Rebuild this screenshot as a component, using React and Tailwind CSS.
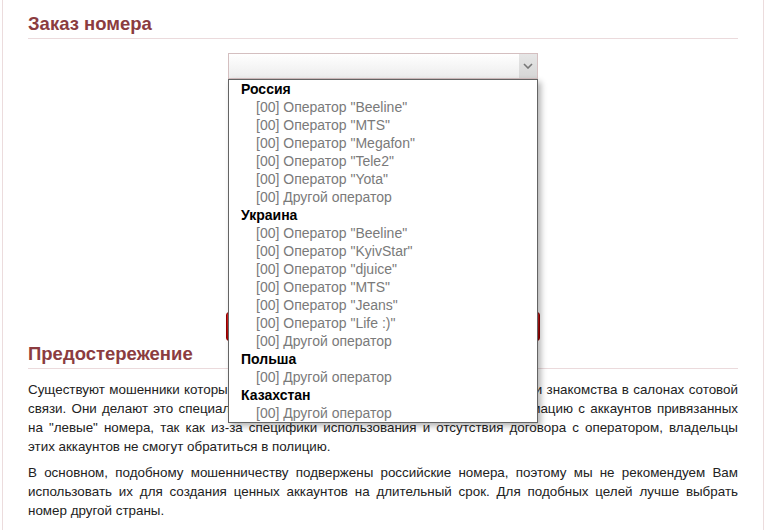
import React from 'react';

const groups = [
  {
    name: 'Россия',
    items: ['Оператор "Beeline"', 'Оператор "MTS"', 'Оператор "Megafon"', 'Оператор "Tele2"', 'Оператор "Yota"', 'Другой оператор'],
  },
  {
    name: 'Украина',
    items: ['Оператор "Beeline"', 'Оператор "KyivStar"', 'Оператор "djuice"', 'Оператор "MTS"', 'Оператор "Jeans"', 'Оператор "Life :)"', 'Другой оператор'],
  },
  { name: 'Польша', items: ['Другой оператор'] },
  { name: 'Казахстан', items: ['Другой оператор'] },
];

const para1 = [
  'Существуют мошенники которые массово скупают номера телефонов через свои знакомства в салонах сотовой',
  'связи. Они делают это специально, чтобы в последствии похитить всю информацию с аккаунтов привязанных',
  'на "левые" номера, так как из-за специфики использования и отсутствия договора с оператором, владельцы',
];

const para2 = [
  'В основном, подобному мошенничеству подвержены российские номера, поэтому мы не рекомендуем Вам',
  'использовать их для создания ценных аккаунтов на длительный срок. Для подобных целей лучше выбрать',
];

function Lines({ lines, last }) {
  return (
    <div className="text-[13.4px] leading-[19px] text-[#222]">
      {lines.map((l, i) => (
        <div key={i} className="whitespace-nowrap text-justify [text-align-last:justify]">{l}</div>
      ))}
      <div>{last}</div>
    </div>
  );
}

export default function App() {
  return (
    <div className="w-[766px] h-[530px] overflow-hidden bg-white pl-[2px] font-['Liberation_Sans',Arial,sans-serif]">
      <div className="w-[762px] h-full border-x border-[#ecdcdd] pl-[25px] pr-[25px] pt-[12px]">
        <h2 className="text-[18.5px] leading-[24px] font-bold text-[#8b3c3f] pb-[2px] border-b border-[#ebdadc]">
          Заказ номера
        </h2>

        <div className="relative mt-[14px] w-[310px] mx-auto">
          <div className="h-[26px] border border-[#d4bfc0] bg-gradient-to-b from-white to-[#ededed] flex justify-end">
            <div className="w-[18px] h-full bg-gradient-to-b from-[#e6e6e6] to-[#d6d6d6] flex items-center justify-center">
              <svg width="10" height="6" viewBox="0 0 10 6">
                <path d="M1 1 L5 5 L9 1" fill="none" stroke="#777" strokeWidth="1.6" />
              </svg>
            </div>
          </div>

          <div className="absolute left-0 top-[26px] w-[310px] z-10 bg-white border border-[#646464] shadow-[3px_3px_6px_rgba(0,0,0,0.3)] text-[14px] leading-[18px]">
            {groups.map((g) => (
              <div key={g.name}>
                <div className="pl-[12px] font-bold text-black">{g.name}</div>
                {g.items.map((it, i) => (
                  <div key={i} className="pl-[27px] text-[#7a7a7a] whitespace-nowrap">[00] {it}</div>
                ))}
              </div>
            ))}
          </div>

          <button className="block mt-[233px] -mx-[2px] w-[314px] h-[29px] rounded-[3px] border border-[#8e0000] bg-gradient-to-b from-[#d62020] to-[#a80000] text-white text-[14px]">
            Заказать
          </button>
        </div>

        <h2 className="mt-[1px] text-[18.5px] leading-[24px] font-bold text-[#8b3c3f] pb-[2px] border-b border-[#ebdadc]">
          Предостережение
        </h2>

        <div className="mt-[11px]">
          <Lines lines={para1} last="этих аккаунтов не смогут обратиться в полицию." />
        </div>
        <div className="mt-[7px]">
          <Lines lines={para2} last="номер другой страны." />
        </div>
      </div>
    </div>
  );
}
